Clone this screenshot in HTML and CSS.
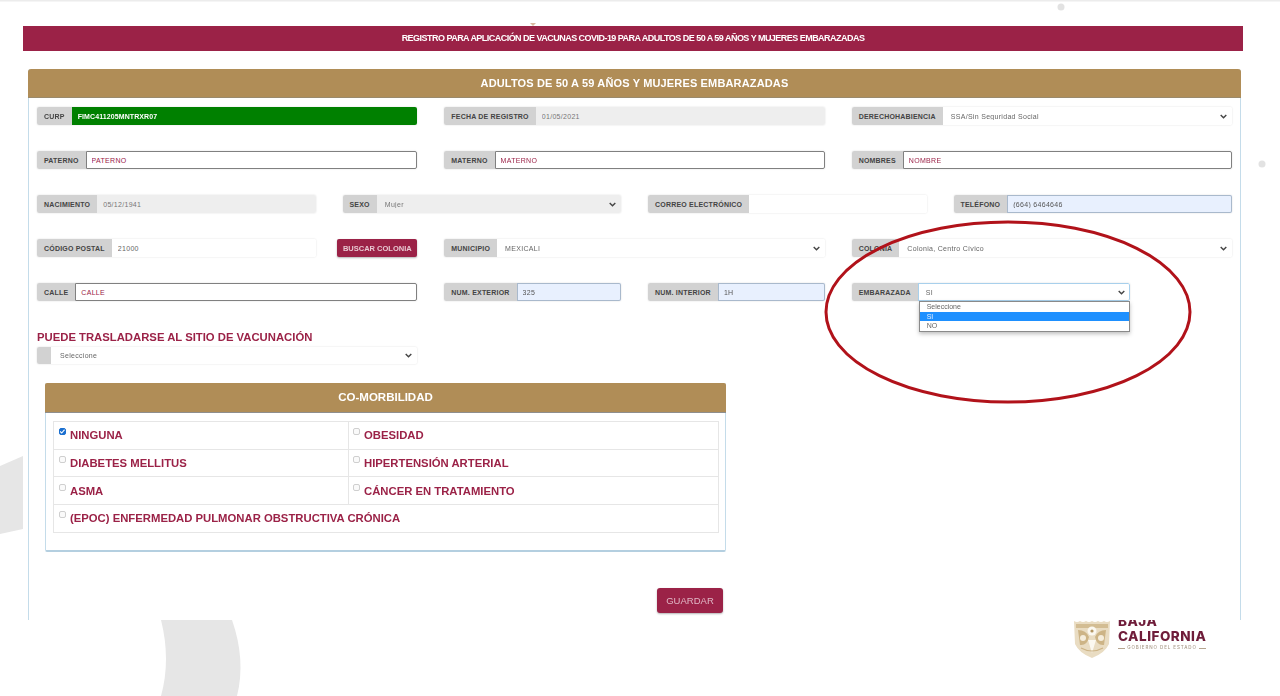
FILE: index.html
```html
<!DOCTYPE html>
<html lang="es">
<head>
<meta charset="utf-8">
<title>Registro para aplicación de vacunas COVID-19</title>
<link rel="stylesheet" href="styles.css">
</head>
<body>
<div class="page">
  <svg class="decor" width="1280" height="696" viewBox="0 0 1280 696" aria-hidden="true">
    <rect x="0" y="0" width="1280" height="1.5" fill="#ececec"/>
    <circle cx="1061" cy="7" r="3.5" fill="#e2e2e2"/>
    <circle cx="1262" cy="164" r="3.5" fill="#e2e2e2"/>
    <path d="M530 23 L536 23 L533 26 Z" fill="#d9b9a0"/>
    <path d="M0 466 L23 456 L23 529 L0 534 Z" fill="#e6e6e6"/>
    <path d="M161 620 Q171 660 161 696 L237 696 Q246 660 232 620 Z" fill="#e6e6e6"/>
  </svg>

  <div class="slide">
    <div class="banner">REGISTRO PARA APLICACIÓN DE VACUNAS COVID-19 PARA ADULTOS DE 50 A 59 AÑOS Y MUJERES EMBARAZADAS</div>
    <div class="panel">
      <div class="panel-head">ADULTOS DE 50 A 59 AÑOS Y MUJERES EMBARAZADAS</div>
      <div class="panel-body">
        <div class="form-grid">
          <div class="group s4"><span class="tag">CURP</span><input class="field ok" value="FIMC411205MNTRXR07"></div>
          <div class="group s4"><span class="tag">FECHA DE REGISTRO</span><input class="field ro" value="01/05/2021"></div>
          <div class="group s4"><span class="tag">DERECHOHABIENCIA</span><select class="field plain"><option>SSA/Sin Seguridad Social</option></select></div>

          <div class="group s4"><span class="tag">PATERNO</span><input class="field req" value="PATERNO"></div>
          <div class="group s4"><span class="tag">MATERNO</span><input class="field req" value="MATERNO"></div>
          <div class="group s4"><span class="tag">NOMBRES</span><input class="field req" value="NOMBRE"></div>

          <div class="group s3"><span class="tag">NACIMIENTO</span><input class="field ro" value="05/12/1941"></div>
          <div class="group s3"><span class="tag">SEXO</span><select class="field ro"><option>Mujer</option></select></div>
          <div class="group s3"><span class="tag">CORREO ELECTRÓNICO</span><input class="field plain" value=""></div>
          <div class="group s3"><span class="tag">TELÉFONO</span><input class="field auto" value="(664) 6464646"></div>

          <div class="group s3"><span class="tag">CÓDIGO POSTAL</span><input class="field plain" value="21000"></div>
          <div class="s1 search-cell"><button class="btn search" type="button">BUSCAR COLONIA</button></div>
          <div class="group s4"><span class="tag">MUNICIPIO</span><select class="field plain"><option>MEXICALI</option></select></div>
          <div class="group s4"><span class="tag">COLONIA</span><select class="field plain"><option>Colonia, Centro Cívico</option></select></div>

          <div class="group s4"><span class="tag">CALLE</span><input class="field req" value="CALLE"></div>
          <div class="group s2"><span class="tag">NUM. EXTERIOR</span><input class="field auto" value="325"></div>
          <div class="group s2"><span class="tag">NUM. INTERIOR</span><input class="field auto" value="1H"></div>
          <div class="group s3 open">
            <span class="tag">EMBARAZADA</span><select class="field focus"><option>SI</option></select>
            <ul class="dropdown">
              <li>Seleccione</li>
              <li class="active">SI</li>
              <li>NO</li>
            </ul>
          </div>
        </div>

        <h3 class="question">PUEDE TRASLADARSE AL SITIO DE VACUNACIÓN</h3>
        <div class="group narrow"><span class="tag blank"></span><select class="field plain pad"><option>Seleccione</option></select></div>

        <section class="morb">
          <div class="morb-head">CO-MORBILIDAD</div>
          <div class="morb-body">
            <table class="morb-table">
              <tr>
                <td><label><input type="checkbox" checked><span>NINGUNA</span></label></td>
                <td><label><input type="checkbox"><span>OBESIDAD</span></label></td>
              </tr>
              <tr>
                <td><label><input type="checkbox"><span>DIABETES MELLITUS</span></label></td>
                <td><label><input type="checkbox"><span>HIPERTENSIÓN ARTERIAL</span></label></td>
              </tr>
              <tr>
                <td><label><input type="checkbox"><span>ASMA</span></label></td>
                <td><label><input type="checkbox"><span>CÁNCER EN TRATAMIENTO</span></label></td>
              </tr>
              <tr>
                <td colspan="2"><label><input type="checkbox"><span>(EPOC) ENFERMEDAD PULMONAR OBSTRUCTIVA CRÓNICA</span></label></td>
              </tr>
            </table>
          </div>
        </section>

        <button class="btn save" type="button">GUARDAR</button>
      </div>
    </div>
  </div>

  <footer class="foot">
    <div class="logo">
      <svg class="shield" width="38" height="38" viewBox="0 0 38 38" aria-hidden="true">
        <path d="M1 1 Q4 3 7 1 Q10 3 13 1 Q16 3 19 1 Q22 3 25 1 Q28 3 31 1 Q34 3 37 1 L36 24 Q32 33 19 38 Q6 33 2 24 Z" fill="#e9dcc2"/>
        <path d="M3 4 H35 V8 H3 Z" fill="#d3bd93"/>
        <path d="M5 10 Q13 10 16 17 Q14 26 7 25 Z M33 10 Q25 10 22 17 Q24 26 31 25 Z" fill="#cdb486"/>
        <circle cx="19" cy="11" r="4.5" fill="#fbf8f0"/>
        <path d="M15 20 H23 L19 33 Z" fill="#fbf8f0"/>
        <circle cx="10" cy="18" r="3" fill="#f5eddc"/>
        <circle cx="28" cy="18" r="3" fill="#f5eddc"/>
        <circle cx="19" cy="11" r="1.6" fill="#b39662"/>
        <path d="M8 28 Q19 34 30 28" fill="none" stroke="#cdb486" stroke-width="1.2"/>
      </svg>
      <div class="wordmark">
        <div class="w-baja">BAJA</div>
        <div class="w-cal">CALIFORNIA</div>
        <div class="w-gob">GOBIERNO DEL ESTADO</div>
      </div>
    </div>
  </footer>

  <svg class="ring" width="374" height="188" viewBox="0 0 374 188" aria-hidden="true">
    <ellipse cx="187" cy="94" rx="182" ry="90" fill="none" stroke="#b1121a" stroke-width="3"/>
  </svg>
</div>
</body>
</html>
```
FILE: styles.css
```css
* { box-sizing: border-box; }
html, body { margin: 0; padding: 0; background: #fff; }
body { font-family: "Liberation Sans", Arial, sans-serif; }

.page { position: relative; width: 1280px; height: 696px; overflow: hidden; background: #fff; }
.decor { position: absolute; left: 0; top: 0; }
.ring { position: absolute; left: 821px; top: 218px; filter: blur(0.4px); }

.slide { position: relative; height: 620px; overflow: hidden; padding: 26px 37px 0 23px; filter: blur(0.45px); }

.banner { height: 25px; line-height: 24px; background: #9b2247; color: #fff; text-align: center; font-size: 9px; font-weight: bold; letter-spacing: -0.53px; }

.panel { margin: 18px 2px 0 5px; background: #fff; border: 1px solid #c4dcea; border-top: 0; border-radius: 3px 3px 0 0; height: 600px; }
.panel-head { margin: 0 -1px; height: 29px; line-height: 28px; background: #b08d57; border-bottom: 1px solid #9a8a6c; border-radius: 3px 3px 0 0; color: #fff; text-align: center; font-size: 11px; font-weight: bold; letter-spacing: 0.15px; }
.panel-body { padding: 9px 8px 0; }

.form-grid { display: grid; grid-template-columns: repeat(12, minmax(0, 1fr)); column-gap: 27px; row-gap: 26px; grid-auto-rows: 18px; }
.s1 { grid-column: span 1; }
.s2 { grid-column: span 2; }
.s3 { grid-column: span 3; }
.s4 { grid-column: span 4; }

.group { position: relative; display: flex; height: 18px; border-radius: 2px; box-shadow: 0 0 2px rgba(0,0,0,.14); }
.tag { flex: none; display: flex; align-items: center; padding: 0 7px; background: #d2d2d2; color: #444; font-size: 7px; font-weight: bold; letter-spacing: 0.2px; border-radius: 2px 0 0 2px; white-space: nowrap; }
.tag.blank { width: 14px; padding: 0; }

.field { flex: 1; min-width: 0; width: 100%; height: 100%; padding: 0 6px; border: 0; border-radius: 0 2px 2px 0; outline: 0; font-family: "Liberation Sans", Arial, sans-serif; font-size: 7px; letter-spacing: 0.3px; color: #666; background: #fff; }
select.field { appearance: none; padding: 0 14px 0 8px; background-image: url("data:image/svg+xml;utf8,<svg xmlns='http://www.w3.org/2000/svg' width='7' height='5' viewBox='0 0 7 5'><path d='M.7 .9 3.5 3.7 6.3 .9' fill='none' stroke='%23444' stroke-width='1.4'/></svg>"); background-repeat: no-repeat; background-position: right 5px center; }
.field.ok { background: #008000; color: #fff; font-weight: bold; letter-spacing: 0.1px; }
.field.ro { background-color: #eeeeee; color: #777; }
.field.plain { background-color: #fff; }
.field.req { border: 1px solid #808080; color: #9b2247; background: #fff; padding: 0 5px; }
.field.auto { background: #e8f0fe; color: #555; box-shadow: inset 0 0 0 1px #a9b9cc; }
.field.focus { background-color: #fff; box-shadow: inset 0 0 0 1px #a8d0ec; }
.field.pad { padding-left: 9px; }

.search-cell { display: flex; justify-content: flex-end; }
.btn { flex: none; border: 0; border-radius: 2px; background: #9b2247; font-family: "Liberation Sans", Arial, sans-serif; font-weight: bold; box-shadow: 0 1px 2px rgba(0,0,0,.3); padding: 0; }
.search { width: 80px; height: 18px; color: #e8c8d2; font-size: 7.5px; }
.save { display: block; width: 66px; height: 25px; margin: 36px 0 0 620px; color: #e0b8c6; font-size: 9.5px; font-weight: normal; border-radius: 3px; }

.dropdown { position: absolute; z-index: 2; left: 67px; right: 0; top: 18px; margin: 0; padding: 0; list-style: none; background: #fff; border: 1px solid #8a8a8a; box-shadow: 0 2px 4px rgba(0,0,0,.25); font-size: 7px; color: #666; }
.dropdown li { height: 9.5px; line-height: 9.5px; padding-left: 7px; }
.dropdown li.active { background: #1e90ff; color: #e6f0ff; }

.question { margin: 29px 0 0; height: 17px; line-height: 14px; font-size: 11.3px; font-weight: bold; color: #9b2247; }
.narrow { width: 380px; height: 17px; }

.morb { margin: 19px 0 0 8px; width: 681px; height: 169px; border: 1px solid #c4dcea; border-top: 0; border-bottom: 2px solid #b4cfe0; border-radius: 2px; }
.morb-head { margin: 0 -1px; height: 30px; line-height: 29px; background: #b08d57; border-bottom: 1px solid #8e8e8e; color: #fff; text-align: center; font-size: 11.5px; font-weight: bold; border-radius: 2px 2px 0 0; }
.morb-body { padding: 8px 7px 0; }
.morb-table { width: 665px; border-collapse: collapse; table-layout: fixed; }
.morb-table td { width: 295px; height: 27.7px; padding: 0 0 0 5px; border: 1px solid #e6e6e6; }
.morb-table td + td { width: 370px; padding-left: 4px; }
.morb-table td[colspan] { width: 665px; }
.morb-table label { display: flex; align-items: flex-start; gap: 4px; }
.morb-table input { appearance: none; flex: none; width: 7px; height: 7px; margin: 0; border: 1px solid #cfcfcf; border-radius: 2px; background: #fafafa; }
.morb-table input:checked { border-color: #1a6fd0; background: #1a6fd0 url("data:image/svg+xml;utf8,<svg xmlns='http://www.w3.org/2000/svg' width='7' height='7' viewBox='0 0 7 7'><path d='M1 3.4 2.7 5 5.6 1.6' fill='none' stroke='%23fff' stroke-width='1.1'/></svg>") center / 7px 7px no-repeat; }
.morb-table span { padding-top: 1px; font-size: 11.3px; line-height: 13px; font-weight: bold; color: #9b2247; }

.foot { position: relative; height: 76px; overflow: hidden; display: flex; justify-content: flex-end; padding-right: 74px; }
.logo { display: flex; gap: 7px; align-items: flex-start; }
.shield { flex: none; filter: blur(0.5px); }
.wordmark { margin-top: -6px; width: 88px; color: #6f1d3a; font-family: Inter, "Liberation Sans", sans-serif; font-weight: 800; filter: blur(0.3px); }
.w-baja, .w-cal { font-size: 13.5px; line-height: 15px; letter-spacing: 0.5px; white-space: nowrap; }
.w-gob { display: flex; align-items: center; gap: 2px; font-size: 4.5px; line-height: 8px; letter-spacing: 0.9px; font-weight: 500; color: #a89a88; white-space: nowrap; }
.w-gob::before, .w-gob::after { content: ""; flex: 1; height: 1px; background: #b5a48e; }
```
